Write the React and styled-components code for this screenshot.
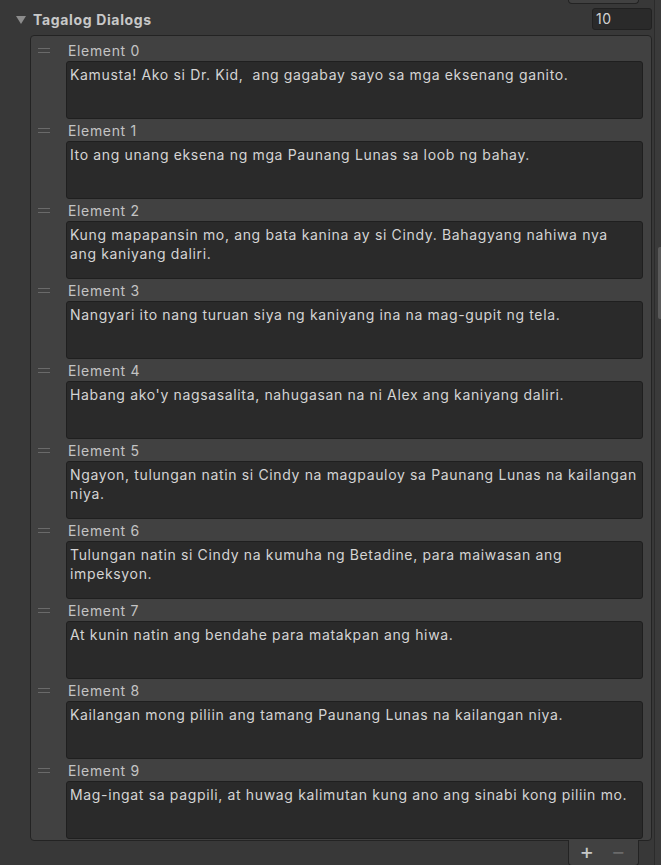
import React from "react";
import styled, { createGlobalStyle } from "styled-components";

const GlobalStyle = createGlobalStyle`
  html, body { margin: 0; padding: 0; background: #383838; }
  body { font-family: Inter, "Noto Sans", sans-serif; }
`;

const Page = styled.div`
  display: flex;
  width: 661px;
  height: 865px;
  overflow: hidden;
  background: #383838;
`;

const Main = styled.div`
  width: 654px;
  display: flex;
  flex-direction: column;
`;

const ScrollTrack = styled.div`
  width: 6px;
  border-left: 1px solid #2b2b2b;
  background: #3a3a3a;
  display: flex;
  justify-content: flex-end;
`;

const ScrollThumb = styled.div`
  width: 3px;
  height: 72px;
  margin-top: 247px;
  background: #5a5a5a;
  border-radius: 2px 0 0 2px;
`;

const FooterRow = styled.div`
  display: flex;
  justify-content: flex-end;
  padding-right: ${(p) => p.$right}px;
  position: relative;
  z-index: 1;
  margin-top: ${(p) => (p.$overlap ? -1 : 0)}px;
`;

const FooterBox = styled.div`
  width: 71px;
  height: ${(p) => p.$h}px;
  box-sizing: border-box;
  background: #414141;
  border: 1px solid #232323;
  border-top: none;
  border-radius: 0 0 4px 4px;
  display: flex;
  align-items: center;
  justify-content: space-around;
  padding: 0 4px 3px 2px;
`;

const FooterBtn = styled.span`
  font-size: 22px;
  line-height: 20px;
  font-weight: 400;
  color: ${(p) => (p.$disabled ? "#6a6a6a" : "#c8c8c8")};
  width: 24px;
  text-align: center;
`;

const Header = styled.div`
  display: flex;
  align-items: center;
  height: 22px;
  margin-top: 4px;
  padding-left: 16px;
  padding-right: 2px;
`;

const Arrow = styled.svg`
  width: 10px;
  height: 8px;
  margin-right: 7px;
  margin-top: 1px;
`;

const Title = styled.div`
  flex: 1;
  font-size: 14px;
  letter-spacing: 0.65px;
  font-weight: 700;
  color: #c8c8c8;
`;

const SizeField = styled.div`
  width: 60px;
  height: 22px;
  box-sizing: border-box;
  background: #2a2a2a;
  border: 1px solid #212121;
  border-radius: 3px;
  font-size: 14px;
  letter-spacing: 0.65px;
  color: #d2d2d2;
  padding: 0 3px;
  line-height: 20px;
`;

const Panel = styled.div`
  margin: 5px 2px 0 30px;
  background: #414141;
  border: 1px solid #232323;
  border-radius: 4px;
  padding: 4px 8px 0 0;
  display: flex;
  flex-direction: column;
`;

const Item = styled.div`
  display: grid;
  grid-template-columns: 35px 1fr;
  grid-template-rows: 20px 58px;
  row-gap: 1px;
  padding-bottom: 1px;
`;

const Handle = styled.div`
  grid-row: 1;
  grid-column: 1;
  display: flex;
  flex-direction: column;
  gap: 3px;
  padding: 8px 0 0 7px;
  & > i {
    display: block;
    width: 12px;
    height: 1px;
    background: #6a6a6a;
  }
`;

const Label = styled.div`
  grid-row: 1;
  grid-column: 2;
  font-size: 14px;
  letter-spacing: 0.65px;
  line-height: 20px;
  padding-top: 1px;
  color: #c4c4c4;
  padding-left: 2px;
`;

const TextArea = styled.div`
  grid-row: 2;
  grid-column: 2;
  box-sizing: border-box;
  background: #2a2a2a;
  border: 1px solid #1f1f1f;
  border-radius: 3px;
  padding: 3px 3px;
  font-size: 14px;
  letter-spacing: 0.65px;
  line-height: 19px;
  color: #d4d4d4;
  white-space: pre-wrap;
  overflow: hidden;
`;

const items = [
  "Kamusta! Ako si Dr. Kid,  ang gagabay sayo sa mga eksenang ganito.",
  "Ito ang unang eksena ng mga Paunang Lunas sa loob ng bahay.",
  "Kung mapapansin mo, ang bata kanina ay si Cindy. Bahagyang nahiwa nya ang kaniyang daliri.",
  "Nangyari ito nang turuan siya ng kaniyang ina na mag-gupit ng tela.",
  "Habang ako'y nagsasalita, nahugasan na ni Alex ang kaniyang daliri.",
  "Ngayon, tulungan natin si Cindy na magpauloy sa Paunang Lunas na kailangan niya.",
  "Tulungan natin si Cindy na kumuha ng Betadine, para maiwasan ang impeksyon.",
  "At kunin natin ang bendahe para matakpan ang hiwa.",
  "Kailangan mong piliin ang tamang Paunang Lunas na kailangan niya.",
  "Mag-ingat sa pagpili, at huwag kalimutan kung ano ang sinabi kong piliin mo.",
];

export default function App() {
  return (
    <Page>
      <GlobalStyle />
      <Main>
        <FooterRow $right={15}>
          <FooterBox $h={4} />
        </FooterRow>
        <Header>
          <Arrow viewBox="0 0 10 8">
            <polygon points="0,0 10,0 5,8" fill="#8c8c8c" />
          </Arrow>
          <Title>Tagalog Dialogs</Title>
          <SizeField>10</SizeField>
        </Header>
        <Panel>
          {items.map((t, i) => (
            <Item key={i}>
              <Handle>
                <i />
                <i />
              </Handle>
              <Label>Element {i}</Label>
              <TextArea>{t}</TextArea>
            </Item>
          ))}
        </Panel>
        <FooterRow $right={15} $overlap>
          <FooterBox $h={26}>
            <FooterBtn>+</FooterBtn>
            <FooterBtn $disabled>−</FooterBtn>
          </FooterBox>
        </FooterRow>
      </Main>
      <ScrollTrack>
        <ScrollThumb />
      </ScrollTrack>
    </Page>
  );
}
